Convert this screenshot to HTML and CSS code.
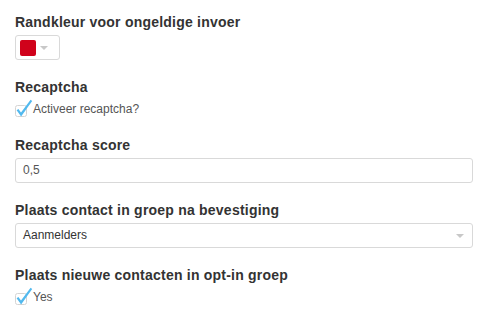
FILE: index.html
```html
<!DOCTYPE html>
<html lang="nl">
<head>
<meta charset="utf-8">
<title>Formulier instellingen</title>
<link rel="stylesheet" href="styles.css">
</head>
<body>
<form class="settings">
  <div class="group">
    <div class="label">Randkleur voor ongeldige invoer</div>
    <div class="color-picker">
      <span class="swatch"></span>
      <span class="caret"></span>
    </div>
  </div>

  <div class="group">
    <div class="label">Recaptcha</div>
    <label class="check-row">
      <svg class="check" width="18" height="19" viewBox="0 0 18 19">
        <rect x="0.5" y="6.5" width="11" height="11" rx="2" fill="#fff" stroke="#d4d4d4"/>
        <path d="M1.6 11.2 L3.4 9.9 L6 13.6 L15.6 0.8 L17.2 2 L6.1 17.4 Z" fill="#52b9ee"/>
      </svg>
      <span class="check-text">Activeer recaptcha?</span>
    </label>
  </div>

  <div class="group">
    <div class="label">Recaptcha score</div>
    <div class="field">0,5</div>
  </div>

  <div class="group">
    <div class="label">Plaats contact in groep na bevestiging</div>
    <div class="field select">
      <span class="select-text">Aanmelders</span>
      <span class="select-caret"></span>
    </div>
  </div>

  <div class="group">
    <div class="label">Plaats nieuwe contacten in opt-in groep</div>
    <label class="check-row">
      <svg class="check" width="18" height="19" viewBox="0 0 18 19">
        <rect x="0.5" y="6.5" width="11" height="11" rx="2" fill="#fff" stroke="#d4d4d4"/>
        <path d="M1.6 11.2 L3.4 9.9 L6 13.6 L15.6 0.8 L17.2 2 L6.1 17.4 Z" fill="#52b9ee"/>
      </svg>
      <span class="check-text">Yes</span>
    </label>
  </div>
</form>
</body>
</html>
```

FILE: styles.css
```css
html, body {
  margin: 0;
  padding: 0;
  background: #fff;
}

body {
  font-family: "Liberation Sans", Arial, Helvetica, sans-serif;
  color: #333;
}

.settings {
  padding: 12px 12px 0 15px;
}

.group {
  margin-bottom: 17px;
}

.label {
  font-size: 14px;
  font-weight: bold;
  line-height: 20px;
  letter-spacing: 0.22px;
  color: #333;
  margin-bottom: 3px;
}

.color-picker {
  box-sizing: border-box;
  width: 45px;
  height: 25px;
  border: 1px solid #d9d9d9;
  border-radius: 3px;
  display: flex;
  align-items: center;
  padding-left: 4px;
  gap: 4px;
}

.swatch {
  width: 16px;
  height: 16px;
  border-radius: 2px;
  background: #d0021b;
}

.caret {
  width: 0;
  height: 0;
  border-left: 4px solid transparent;
  border-right: 4px solid transparent;
  border-top: 4px solid #c8c8c8;
}

.check-row {
  display: flex;
  align-items: flex-start;
  margin-top: -1px;
  height: 19px;
}

.check {
  display: block;
  flex: none;
}

.check-text {
  font-size: 12px;
  line-height: 14px;
  padding-top: 3px;
  color: #555;
}

.field {
  box-sizing: border-box;
  height: 25px;
  border: 1px solid #d9d9d9;
  border-radius: 3px;
  padding: 0 7px;
  font-size: 12px;
  line-height: 23px;
  color: #555;
}

.select {
  display: flex;
  align-items: center;
  justify-content: space-between;
  color: #333;
  padding-right: 8px;
}

.select-caret {
  width: 0;
  height: 0;
  border-left: 4px solid transparent;
  border-right: 4px solid transparent;
  border-top: 4px solid #c8c8c8;
}
```
